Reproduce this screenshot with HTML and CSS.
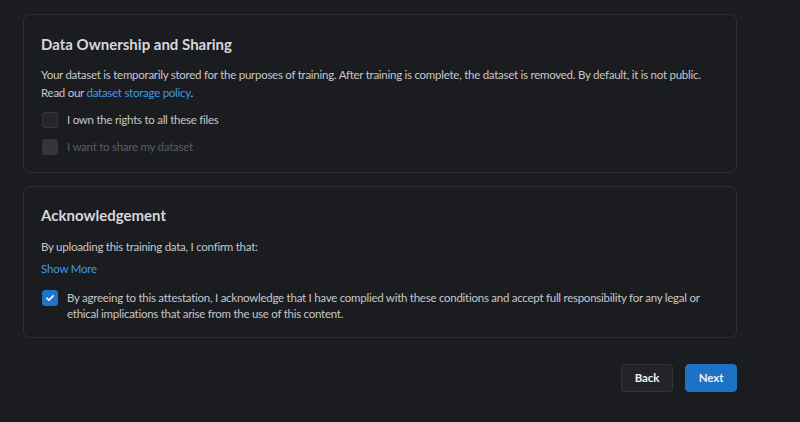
FILE: index.html
```html
<!DOCTYPE html>
<html>
<head>
<meta charset="utf-8">
<link rel="stylesheet" href="styles.css">
</head>
<body>
<div class="page">
  <section class="card card-own">
    <h2 class="title">Data Ownership and Sharing</h2>
    <p class="para">Your dataset is temporarily stored for the purposes of training. After training is complete, the dataset is removed. By default, it is not public. Read our <a class="link" href="#">dataset storage policy</a>.</p>
    <div class="checks">
      <label class="check">
        <span class="box"></span>
        <span class="label">I own the rights to all these files</span>
      </label>
      <label class="check disabled">
        <span class="box"></span>
        <span class="label">I want to share my dataset</span>
      </label>
    </div>
  </section>
  <section class="card card-ack">
    <h2 class="title">Acknowledgement</h2>
    <p class="para">By uploading this training data, I confirm that:</p>
    <a class="link more" href="#">Show More</a>
    <label class="check checked multi">
      <span class="box"><svg viewBox="0 0 16 16" width="16" height="16"><path d="M4.4 8.2l2.4 2.3 4.8-4.9" fill="none" stroke="#fff" stroke-width="1.8" stroke-linecap="round" stroke-linejoin="round"/></svg></span>
      <span class="label">By agreeing to this attestation, I acknowledge that I have complied with these conditions and accept full responsibility for any legal or ethical implications that arise from the use of this content.</span>
    </label>
  </section>
  <div class="actions">
    <button class="btn btn-back">Back</button>
    <button class="btn btn-next">Next</button>
  </div>
</div>
</body>
</html>
```
FILE: styles.css
```css
* { box-sizing: border-box; }
html, body {
  margin: 0;
  background: #1b1c20;
  height: 100%;
}
body {
  font-family: Lato, "Liberation Sans", sans-serif;
  color: #c4c5c8;
}
.page {
  width: 714px;
  margin-left: 23px;
  padding-top: 14px;
  display: flex;
  flex-direction: column;
}
.card {
  border: 1px solid #2e2f34;
  border-radius: 7px;
  background: #1b1c20;
  padding: 18px 17px 17px 17px;
  display: flex;
  flex-direction: column;
}
.card-ack {
  margin-top: 13px;
  padding-top: 17px;
  padding-bottom: 15px;
}
.title {
  margin: 0;
  font-size: 15px;
  line-height: 22px;
  font-weight: 700;
  color: #d6d7da;
}
.para {
  margin: 11px 0 0;
  font-size: 11.5px;
  letter-spacing: -0.26px;
  line-height: 17.5px;
  color: #c6c7ca;
}
.card-ack .para { margin-top: 12px; }
.link {
  color: #3d9ae2;
  text-decoration: none;
}
.checks {
  margin-top: 11px;
  display: flex;
  flex-direction: column;
  gap: 11px;
}
.check {
  display: flex;
  align-items: flex-start;
  gap: 9px;
  font-size: 11.5px;
  letter-spacing: -0.26px;
  line-height: 16px;
  color: #c6c7ca;
}
.box {
  width: 16px;
  height: 16px;
  flex: 0 0 16px;
  border-radius: 3px;
  background: #25262b;
  border: 1px solid #393a40;
  display: flex;
  align-items: center;
  justify-content: center;
  margin-left: 1px;
}
.check.disabled { color: #5b5c62; }
.check.disabled .box {
  background: #34363c;
  border-color: #34363c;
}
.check.checked .box {
  background: #1f74c9;
  border-color: #1f74c9;
}
.more {
  margin-top: 4px;
  font-size: 11.5px;
  letter-spacing: -0.2px;
  line-height: 18px;
  align-self: flex-start;
}
.check.multi { margin-top: 12px; }
.actions {
  margin-top: 26px;
  display: flex;
  justify-content: flex-end;
  gap: 12px;
}
.btn {
  height: 28px;
  width: 52px;
  border-radius: 4px;
  font-family: Lato, "Liberation Sans", sans-serif;
  font-size: 11.5px;
  letter-spacing: -0.1px;
  font-weight: 700;
  color: #f0f1f3;
  padding: 0;
  cursor: pointer;
}
.btn-back {
  background: #232428;
  border: 1px solid #34353a;
}
.btn-next {
  background: #1d72c6;
  border: 1px solid #1d72c6;
}
```
